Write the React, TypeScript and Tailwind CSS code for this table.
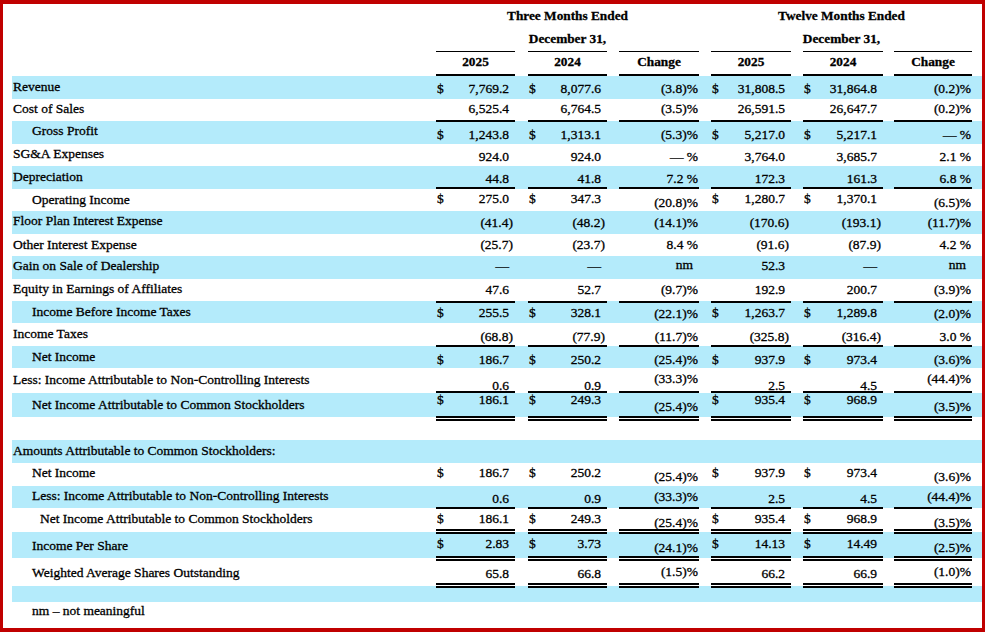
import React from 'react';

type Row = {
  label?: string;
  indent?: 0 | 1 | 2;
  blue?: boolean;
  h: string;
  lp?: string;
  np?: string;
  cp?: string;
  vals?: string[];
  dollar?: boolean;
  line?: 'single' | 'double';
  lineMb?: string;
};

const COLS = ['w-[79px]', 'ml-[13px] w-[79px]', 'ml-[12px] w-[80px]', 'ml-[12px] w-[80px]', 'ml-[12px] w-[80px]', 'ml-[11px] w-[78px]'];
const INDENT = ['pl-[1px]', 'pl-[20px]', 'pl-[28px]'];

const NCI = 'Less: Income Attributable to Non-Controlling Interests';
const NIA = 'Net Income Attributable to Common Stockholders';

const rows: Row[] = [
  { label: 'Revenue', blue: true, h: 'h-[23px]', lp: 'pt-[2.5px]', np: 'pt-[5px]', cp: 'pt-[5px]', dollar: true, vals: ['7,769.2', '8,077.6', '(3.8)%', '31,808.5', '31,864.8', '(0.2)%'] },
  { label: 'Cost of Sales', h: 'h-[22px]', lp: 'pt-[2px]', np: 'pt-[2px]', cp: 'pt-[2px]', vals: ['6,525.4', '6,764.5', '(3.5)%', '26,591.5', '26,647.7', '(0.2)%'], line: 'single', lineMb: '-mb-[1px]' },
  { label: 'Gross Profit', indent: 1, blue: true, h: 'h-[23px]', lp: 'pt-[2px]', np: 'pt-[6px]', cp: 'pt-[6px]', dollar: true, vals: ['1,243.8', '1,313.1', '(5.3)%', '5,217.0', '5,217.1', '— %'] },
  { label: 'SG&A Expenses', h: 'h-[22px]', lp: 'pt-[2px]', np: 'pt-[5px]', cp: 'pt-[4.5px]', vals: ['924.0', '924.0', '— %', '3,764.0', '3,685.7', '2.1 %'] },
  { label: 'Depreciation', blue: true, h: 'h-[23px]', lp: 'pt-[2.5px]', np: 'pt-[4.5px]', cp: 'pt-[4.5px]', vals: ['44.8', '41.8', '7.2 %', '172.3', '161.3', '6.8 %'], line: 'single', lineMb: 'mb-0' },
  { label: 'Operating Income', indent: 1, h: 'h-[22px]', lp: 'pt-[2.5px]', np: 'pt-[2px]', cp: 'pt-[5.5px]', dollar: true, vals: ['275.0', '347.3', '(20.8)%', '1,280.7', '1,370.1', '(6.5)%'] },
  { label: 'Floor Plan Interest Expense', blue: true, h: 'h-[23px]', lp: 'pt-[2px]', np: 'pt-[3.5px]', cp: 'pt-[3.5px]', vals: ['(41.4)', '(48.2)', '(14.1)%', '(170.6)', '(193.1)', '(11.7)%'] },
  { label: 'Other Interest Expense', h: 'h-[22px]', lp: 'pt-[2.5px]', np: 'pt-[3px]', cp: 'pt-[3px]', vals: ['(25.7)', '(23.7)', '8.4 %', '(91.6)', '(87.9)', '4.2 %'] },
  { label: 'Gain on Sale of Dealership', blue: true, h: 'h-[23px]', lp: 'pt-[2px]', np: 'pt-[2px]', cp: 'pt-[1px]', vals: ['—', '—', 'nm', '52.3', '—', 'nm'] },
  { label: 'Equity in Earnings of Affiliates', h: 'h-[22px]', lp: 'pt-[2px]', np: 'pt-[3px]', cp: 'pt-[3px]', vals: ['47.6', '52.7', '(9.7)%', '192.9', '200.7', '(3.9)%'], line: 'single', lineMb: '-mb-[2px]' },
  { label: 'Income Before Income Taxes', indent: 1, blue: true, h: 'h-[22px]', lp: 'pt-[2.5px]', np: 'pt-[4px]', cp: 'pt-[5px]', dollar: true, vals: ['255.5', '328.1', '(22.1)%', '1,263.7', '1,289.8', '(2.0)%'] },
  { label: 'Income Taxes', h: 'h-[23px]', lp: 'pt-[3px]', np: 'pt-[6px]', cp: 'pt-[6px]', vals: ['(68.8)', '(77.9)', '(11.7)%', '(325.8)', '(316.4)', '3.0 %'], line: 'single', lineMb: '-mb-[1px]' },
  { label: 'Net Income', indent: 1, blue: true, h: 'h-[22px]', lp: 'pt-[2.5px]', np: 'pt-[6px]', cp: 'pt-[6px]', dollar: true, vals: ['186.7', '250.2', '(25.4)%', '937.9', '973.4', '(3.6)%'] },
  { label: NCI, h: 'h-[25px]', lp: 'pt-[4px]', np: 'pt-[9.5px]', cp: 'pt-[3px]', vals: ['0.6', '0.9', '(33.3)%', '2.5', '4.5', '(44.4)%'], line: 'single', lineMb: 'mb-0' },
  { label: NIA, indent: 1, blue: true, h: 'h-[24px]', lp: 'pt-[4px]', np: '-mt-[1px]', cp: 'pt-[6px]', dollar: true, vals: ['186.1', '249.3', '(25.4)%', '935.4', '968.9', '(3.5)%'], line: 'double', lineMb: '-mb-[4px]' },
  { h: 'h-[23px]' },
  { label: 'Amounts Attributable to Common Stockholders:', blue: true, h: 'h-[23px]', lp: 'pt-[3px]' },
  { label: 'Net Income', indent: 1, h: 'h-[23px]', lp: 'pt-[1.5px]', np: 'pt-[1.5px]', cp: 'pt-[5.5px]', dollar: true, vals: ['186.7', '250.2', '(25.4)%', '937.9', '973.4', '(3.6)%'] },
  { label: NCI, indent: 1, blue: true, h: 'h-[22px]', lp: 'pt-[2px]', np: 'pt-[5px]', cp: 'pt-[2.5px]', vals: ['0.6', '0.9', '(33.3)%', '2.5', '4.5', '(44.4)%'], line: 'single', lineMb: '-mb-[1px]' },
  { label: NIA, indent: 2, h: 'h-[24px]', lp: 'pt-[3px]', np: 'pt-[3px]', cp: 'pt-[6.5px]', dollar: true, vals: ['186.1', '249.3', '(25.4)%', '935.4', '968.9', '(3.5)%'], line: 'double', lineMb: '-mb-[2px]' },
  { label: 'Income Per Share', indent: 1, blue: true, h: 'h-[26px]', lp: 'pt-[6px]', np: 'pt-[4px]', cp: 'pt-[7.5px]', dollar: true, vals: ['2.83', '3.73', '(24.1)%', '14.13', '14.49', '(2.5)%'], line: 'double', lineMb: '-mb-[3px]' },
  { label: 'Weighted Average Shares Outstanding', indent: 1, h: 'h-[28px]', lp: 'pt-[7px]', np: 'pt-[8px]', cp: 'pt-[5.5px]', vals: ['65.8', '66.8', '(1.5)%', '66.2', '66.9', '(1.0)%'], line: 'double', lineMb: '-mb-[2px]' },
  { blue: true, h: 'h-[16px]' },
  { label: 'nm – not meaningful', indent: 1, h: 'h-[22px]', lp: 'pt-[1px]' },
];

function Amount({ v, dollar }: { v: string; dollar?: boolean }) {
  const paren = v.endsWith(')');
  return (
    <div className="flex justify-between pl-[1px] pr-[6px]">
      <span>{dollar ? '$' : ''}</span>
      <span>{paren ? <>{v.slice(0, -1)}<span className="-mr-[4px]">)</span></> : v}</span>
    </div>
  );
}

function Line({ r }: { r: Row }) {
  const border = r.line === 'single' ? 'border-b-2 border-black' : r.line === 'double' ? 'border-b-[5px] border-double border-black' : '';
  return (
    <div className={`flex ${r.h} ${r.blue ? 'bg-[#b4ebfb]' : ''}`}>
      <div className={`w-[424px] shrink-0 whitespace-nowrap ${INDENT[r.indent ?? 0]}`}>
        {r.label && <div className={r.lp}>{r.label}</div>}
      </div>
      {r.vals && r.vals.map((v, i) => {
        const change = i === 2 || i === 5;
        return (
          <div key={i} className={`${COLS[i]} shrink-0 whitespace-nowrap ${border} ${r.line ? `relative ${r.lineMb}` : ''}`}>
            {change ? (
              <div className={`text-right ${v === 'nm' ? 'pr-[6px]' : 'pr-[1px]'} ${r.cp}`}>{v}</div>
            ) : (
              <div className={r.np}>
                <Amount v={v} dollar={r.dollar && v !== '—'} />
              </div>
            )}
          </div>
        );
      })}
    </div>
  );
}

export default function App() {
  return (
    <div className="w-[985px] h-[632px] bg-white border-[#c00000] border-x-[3px] border-t-4 border-b-4 text-[13.5px] leading-4 text-black font-['Liberation_Serif','Times_New_Roman',serif] [-webkit-text-stroke:0.3px_black] overflow-hidden">
      <div className="pl-[9px]">
        {/* header */}
        <div className="flex font-bold leading-[23px] text-[13.3px]">
          <div className="w-[424px] shrink-0" />
          <div className="w-[263px] text-center">
            <div>Three Months Ended</div>
            <div>December 31,</div>
          </div>
          <div className="ml-[12px] w-[261px] text-center">
            <div>Twelve Months Ended</div>
            <div>December 31,</div>
          </div>
        </div>
        <div className="flex mt-[1px] h-[25px] font-bold text-[13.3px]">
          <div className="w-[424px] shrink-0" />
          {['2025', '2024', 'Change', '2025', '2024', 'Change'].map((h, i) => (
            <div key={i} className={`${COLS[i]} shrink-0 border-t border-b-2 border-black text-center pt-[2px]`}>{h}</div>
          ))}
        </div>
        {rows.map((r, i) => <Line key={i} r={r} />)}
      </div>
    </div>
  );
}
